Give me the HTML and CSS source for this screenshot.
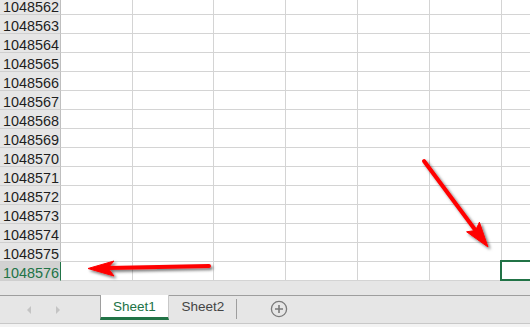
FILE: index.html
```html
<!DOCTYPE html>
<html>
<head>
	<meta charset="UTF-8">
	<title>Sheet1</title>
	<link rel="stylesheet" href="styles.css">
</head>
<body>
	<div class="sheet">
		<div class="row"><div class="rh">1048562</div><div class="c"></div><div class="c wide"></div><div class="c"></div><div class="c"></div><div class="c"></div><div class="c"></div><div class="c last"></div></div>
		<div class="row"><div class="rh">1048563</div><div class="c"></div><div class="c wide"></div><div class="c"></div><div class="c"></div><div class="c"></div><div class="c"></div><div class="c last"></div></div>
		<div class="row"><div class="rh">1048564</div><div class="c"></div><div class="c wide"></div><div class="c"></div><div class="c"></div><div class="c"></div><div class="c"></div><div class="c last"></div></div>
		<div class="row"><div class="rh">1048565</div><div class="c"></div><div class="c wide"></div><div class="c"></div><div class="c"></div><div class="c"></div><div class="c"></div><div class="c last"></div></div>
		<div class="row"><div class="rh">1048566</div><div class="c"></div><div class="c wide"></div><div class="c"></div><div class="c"></div><div class="c"></div><div class="c"></div><div class="c last"></div></div>
		<div class="row"><div class="rh">1048567</div><div class="c"></div><div class="c wide"></div><div class="c"></div><div class="c"></div><div class="c"></div><div class="c"></div><div class="c last"></div></div>
		<div class="row"><div class="rh">1048568</div><div class="c"></div><div class="c wide"></div><div class="c"></div><div class="c"></div><div class="c"></div><div class="c"></div><div class="c last"></div></div>
		<div class="row"><div class="rh">1048569</div><div class="c"></div><div class="c wide"></div><div class="c"></div><div class="c"></div><div class="c"></div><div class="c"></div><div class="c last"></div></div>
		<div class="row"><div class="rh">1048570</div><div class="c"></div><div class="c wide"></div><div class="c"></div><div class="c"></div><div class="c"></div><div class="c"></div><div class="c last"></div></div>
		<div class="row"><div class="rh">1048571</div><div class="c"></div><div class="c wide"></div><div class="c"></div><div class="c"></div><div class="c"></div><div class="c"></div><div class="c last"></div></div>
		<div class="row"><div class="rh">1048572</div><div class="c"></div><div class="c wide"></div><div class="c"></div><div class="c"></div><div class="c"></div><div class="c"></div><div class="c last"></div></div>
		<div class="row"><div class="rh">1048573</div><div class="c"></div><div class="c wide"></div><div class="c"></div><div class="c"></div><div class="c"></div><div class="c"></div><div class="c last"></div></div>
		<div class="row"><div class="rh">1048574</div><div class="c"></div><div class="c wide"></div><div class="c"></div><div class="c"></div><div class="c"></div><div class="c"></div><div class="c last"></div></div>
		<div class="row"><div class="rh">1048575</div><div class="c"></div><div class="c wide"></div><div class="c"></div><div class="c"></div><div class="c"></div><div class="c"></div><div class="c last"></div></div>
		<div class="row"><div class="rh sel">1048576</div><div class="c"></div><div class="c wide"></div><div class="c"></div><div class="c"></div><div class="c"></div><div class="c"></div><div class="c last active"></div></div>
	</div>
	<div class="gap"></div>
	<div class="tabs">
		<div class="nav">
			<span class="arr left"></span>
			<span class="arr right"></span>
		</div>
		<div class="tab on">Sheet1</div>
		<div class="tab">Sheet2</div>
		<div class="add">
			<svg width="18" height="18" viewBox="0 0 18 18">
				<circle cx="9" cy="9" r="7.6" fill="none" stroke="#7a7a7a" stroke-width="1.3"/>
				<path d="M9 5v8M5 9h8" stroke="#7a7a7a" stroke-width="1.6"/>
			</svg>
		</div>
	</div>
	<div class="foot"></div>

	<svg class="marks" width="530" height="327" viewBox="0 0 530 327">
		<defs>
			<filter id="sh" x="-20%" y="-20%" width="140%" height="140%">
				<feDropShadow dx="2" dy="2" stdDeviation="1.6" flood-color="#000" flood-opacity="0.55"/>
			</filter>
		</defs>
		<g filter="url(#sh)" fill="#ff0000" stroke="#ff0000">
			<path d="M209 266 L108 268" stroke-width="4" stroke-linecap="round" fill="none"/>
			<polygon points="88,268.5 114,261 108,268 114,276" stroke-width="1"/>
			<path d="M424 161 L476 231" stroke-width="4" stroke-linecap="round" fill="none"/>
			<polygon points="488,247 466.6,231.8 475.5,230.5 479.4,222.2" stroke-width="1"/>
		</g>
	</svg>
</body>
</html>
```

FILE: styles.css
```css
* {
	margin: 0;
	padding: 0;
}

body {
	width: 530px;
	height: 327px;
	overflow: hidden;
	position: relative;
	background: #fff;
	font-family: "Liberation Sans", Arial, sans-serif;
}

.sheet {
	margin-top: -4px;
}

.row {
	display: flex;
	height: 19px;
}

.rh {
	width: 59px;
	height: 18px;
	flex: none;
	background: #e6e6e6;
	border-right: 1px solid #bfbfbf;
	border-bottom: 1px solid #cfcfcf;
	text-align: right;
	font-size: 14.4px;
	line-height: 22px;
	color: #1e1e1e;
	overflow: hidden;
	padding-right: 1px;
	white-space: nowrap;
}

.rh.sel {
	background: #d2d2d2;
	color: #217346;
	border-right-color: #217346;
}

.c {
	width: 71px;
	height: 18px;
	flex: none;
	border-right: 1px solid #d4d4d4;
	border-bottom: 1px solid #d4d4d4;
}

.c.wide {
	width: 80px;
}

.c.last {
	flex: 1;
	border-right: none;
}

.c.active {
	position: relative;
}

.c.active::after {
	content: "";
	position: absolute;
	top: -2px;
	left: -2px;
	right: -4px;
	bottom: -1px;
	border: 2px solid #217346;
}

.gap {
	height: 14px;
	background: #e6e6e6;
}

.tabs {
	display: flex;
	height: 27px;
	background: #e6e6e6;
	border-top: 1px solid #9e9e9e;
	border-bottom: 1px solid #c8c8c8;
}

.nav {
	width: 100px;
	flex: none;
	display: flex;
	align-items: center;
	padding-left: 27px;
	box-sizing: border-box;
	gap: 25px;
}

.arr {
	width: 0;
	height: 0;
	border-top: 4px solid transparent;
	border-bottom: 4px solid transparent;
}

.arr.left {
	border-right: 4px solid #c4c4c4;
}

.arr.right {
	border-left: 4px solid #c4c4c4;
}

.tab {
	width: 68px;
	flex: none;
	font-size: 13.5px;
	line-height: 22px;
	height: 21px;
	text-align: center;
	color: #444;
	position: relative;
}

.tab::after {
	content: "";
	position: absolute;
	right: 0;
	top: 3px;
	height: 20px;
	border-right: 1px solid #9e9e9e;
}

.tab.on {
	width: 67px;
	margin-top: -1px;
	height: 22px;
	line-height: 24px;
	background: #fff;
	color: #217346;
	border-left: 1px solid #9e9e9e;
	border-right: 1px solid #c8c8c8;
	border-bottom: 3px solid #217346;
}

.tab.on::after {
	display: none;
}

.add {
	width: 84px;
	display: flex;
	align-items: center;
	justify-content: center;
	height: 26px;
}

.foot {
	height: 3px;
	background: #f3f3f3;
}

.marks {
	position: absolute;
	top: 0;
	left: 0;
	pointer-events: none;
}
```
